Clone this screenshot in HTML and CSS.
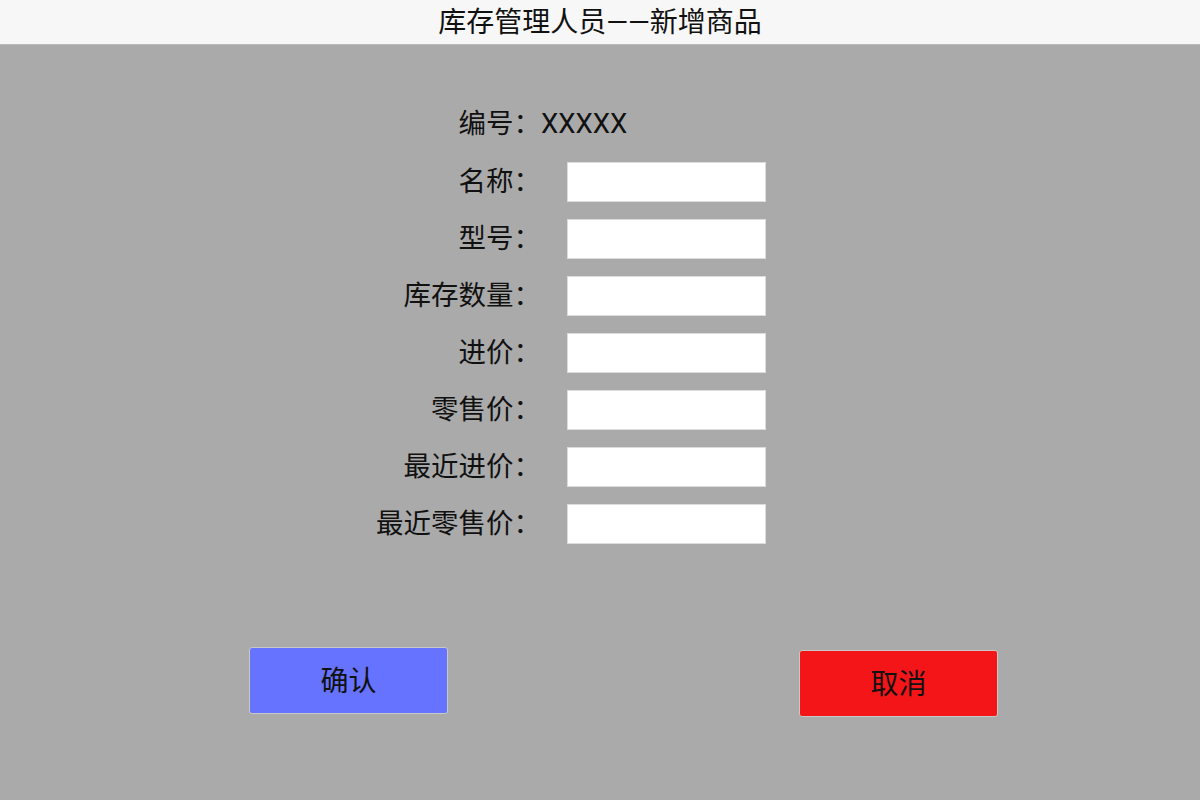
FILE: index.html
```html
<!DOCTYPE html>
<html lang="zh-CN">
<head>
  <meta charset="UTF-8">
  <title>新增商品</title>
  <link rel="stylesheet" href="styles.css">
</head>
<body>
  <header class="topo">库存管理人员——新增商品</header>
  <main class="pagina">
    <form class="form-item" onsubmit="return false">
      <label class="rotulo">编号：</label>
      <span class="valor">XXXXX</span>

      <label class="rotulo" for="nome">名称：</label>
      <input class="campo" id="nome" type="text">

      <label class="rotulo" for="modelo">型号：</label>
      <input class="campo" id="modelo" type="text">

      <label class="rotulo" for="estoque">库存数量：</label>
      <input class="campo" id="estoque" type="text">

      <label class="rotulo" for="custo">进价：</label>
      <input class="campo" id="custo" type="text">

      <label class="rotulo" for="varejo">零售价：</label>
      <input class="campo" id="varejo" type="text">

      <label class="rotulo" for="ult-custo">最近进价：</label>
      <input class="campo" id="ult-custo" type="text">

      <label class="rotulo" for="ult-varejo">最近零售价：</label>
      <input class="campo" id="ult-varejo" type="text">
    </form>

    <div class="botoes">
      <button class="btn btn-ok" type="button">确认</button>
      <button class="btn btn-cancelar" type="button">取消</button>
    </div>
  </main>
</body>
</html>
```

FILE: styles.css
```css
html, body {
  height: 100%;
}
body {
  margin: 0;
  background: #aaaaaa;
  color: #111;
  font-family: Roboto, "Noto Sans CJK SC", sans-serif;
}
.topo {
  height: 45px;
  line-height: 45px;
  text-align: center;
  font-size: 28px;
  background: #f7f7f7;
  border-bottom: 1px solid #b9b9b9;
  box-sizing: border-box;
}
.pagina {
  padding-top: 59px;
}
.form-item {
  display: grid;
  grid-template-columns: 168px 199px;
  grid-template-rows: 41px;
  grid-auto-rows: 40px;
  column-gap: 26px;
  row-gap: 17px;
  width: 393px;
  margin-left: 373px;
}
.rotulo {
  font-size: 27.5px;
  line-height: 40px;
  text-align: right;
  white-space: nowrap;
}
.valor {
  font-size: 27.5px;
  line-height: 40px;
  margin-left: -26px;
}
.campo {
  box-sizing: border-box;
  height: 40px;
  width: 199px;
  border: 1px solid #dcdcdc;
  background: #fff;
  padding: 0 6px;
  font-size: 20px;
  outline: none;
}
.botoes {
  display: flex;
  justify-content: space-between;
  align-items: flex-start;
  margin: 103px 202px 0 249px;
}
.btn {
  width: 199px;
  height: 67px;
  padding-bottom: 4px;
  border: 1px solid #c8c8c8;
  border-radius: 3px;
  font-family: inherit;
  font-size: 28px;
  color: #111;
  cursor: pointer;
}
.btn-ok {
  background: #6673ff;
}
.btn-cancelar {
  background: #f31518;
  margin-top: 3px;
}
```
